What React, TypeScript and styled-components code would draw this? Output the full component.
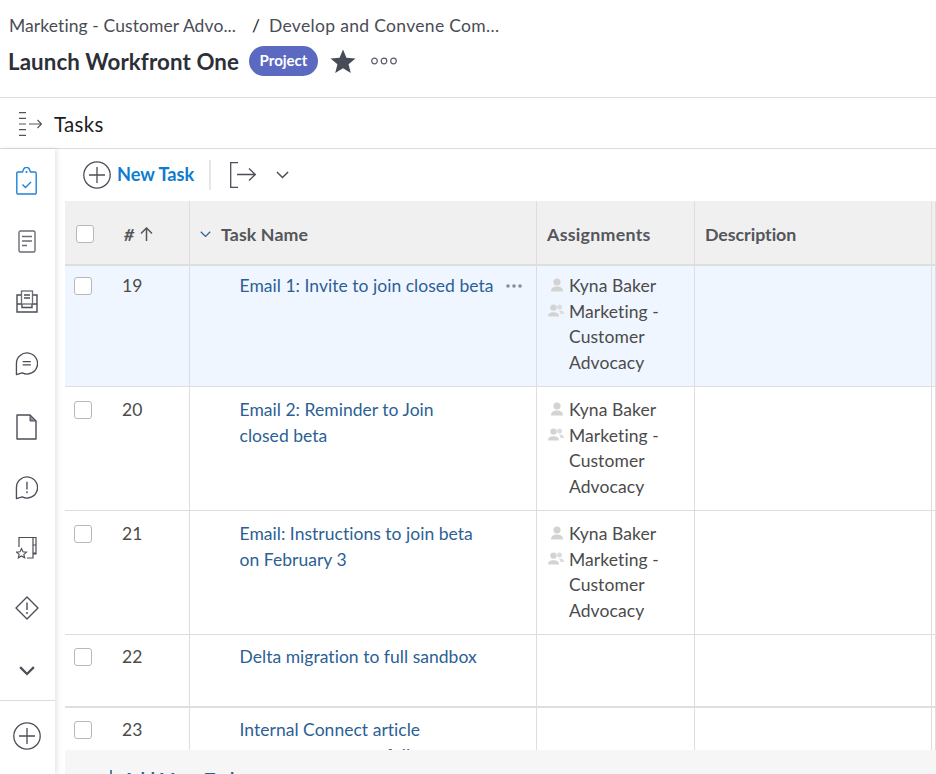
import React from "react";
import styled, { createGlobalStyle } from "styled-components";

const Global = createGlobalStyle`
  html, body { margin: 0; padding: 0; background: #fff; }
  body { font-family: "Lato", "Open Sans", "Liberation Sans", sans-serif; color: #4b4b4b; }
`;

const Page = styled.div`
  position: relative;
  width: 936px;
  height: 774px;
  overflow: hidden;
  display: flex;
  flex-direction: column;
  background: #fff;
`;

const Header = styled.header`
  height: 98px;
  box-sizing: border-box;
  padding: 14px 0 0 8px;
  border-bottom: 1px solid #dcdcdc;
  flex: none;
`;

const Crumbs = styled.div`
  display: flex;
  height: 22px;
  align-items: center;
  font-size: 17.5px;
  color: #4a4c55;
  padding-left: 1px;
`;

const Crumb = styled.span<{ $ls: number }>`
  letter-spacing: ${(p) => p.$ls}px;
`;

const Slash = styled.span`
  margin: 0 9px 0 16px;
  color: #222;
`;

const TitleRow = styled.div`
  display: flex;
  align-items: center;
  margin-top: 9px;
  height: 32px;
`;

const Title = styled.h1`
  margin: 0;
  font-size: 22.3px;
  font-weight: 700;
  color: #2c2f38;
  letter-spacing: 0.1px;
`;

const Badge = styled.span`
  margin-left: 10px;
  width: 69px;
  height: 30px;
  padding-bottom: 2px;
  box-sizing: border-box;
  border-radius: 15px;
  background: #5c69c1;
  color: #fff;
  font-size: 15px;
  font-weight: 700;
  display: flex;
  align-items: center;
  justify-content: center;
`;

const IconSlot = styled.span<{ $ml?: number }>`
  display: flex;
  flex: none;
  margin-left: ${(p) => p.$ml ?? 0}px;
`;

const TabBar = styled.div`
  height: 51px;
  flex: none;
  box-sizing: border-box;
  border-bottom: 1px solid #dcdcdc;
  display: flex;
  align-items: center;
  padding: 2px 0 0 19px;
`;

const TabLabel = styled.span`
  margin-left: 12px;
  font-size: 20.5px;
  letter-spacing: 0.3px;
  color: #1c1c1c;
`;

const Body = styled.div`
  flex: 1;
  display: flex;
  min-height: 0;
`;

const Rail = styled.nav`
  width: 55px;
  flex: none;
  display: flex;
  flex-direction: column;
  box-shadow: 2px 0 5px rgba(0, 0, 0, 0.1);
  background: #fff;
  position: relative;
  z-index: 1;
`;

const RailList = styled.div`
  height: 552px;
  flex: none;
  box-sizing: border-box;
  border-bottom: 1px solid #dcdcdc;
  display: flex;
  flex-direction: column;
  align-items: center;
  padding-top: 2px;
`;

const RailItem = styled.span<{ $h: number }>`
  width: 55px;
  box-sizing: border-box;
  padding-right: 2px;
  height: ${(p) => p.$h}px;
  display: flex;
  align-items: center;
  justify-content: center;
  flex: none;
`;

const RailFoot = styled.div`
  display: flex;
  justify-content: center;
  padding: 21px 2px 0 0;
`;

const Content = styled.main`
  flex: 1;
  min-width: 0;
  padding-left: 10px;
`;

const Toolbar = styled.div`
  height: 52px;
  display: flex;
  align-items: center;
  padding-left: 18px;
  box-sizing: border-box;
`;

const NewTask = styled.span`
  margin: -2px 0 0 6px;
  font-size: 18.2px;
  font-weight: 700;
  color: #0f7ccd;
`;

const ToolDivider = styled.span`
  width: 2px;
  height: 30px;
  margin: 0 19px 0 15px;
  background: #e6e6e6;
`;

const Row = styled.div<{ $h: number; $bg?: string; $thick?: boolean }>`
  display: grid;
  grid-template-columns: 125px 347px 158px 237px 4px;
  height: ${(p) => p.$h}px;
  box-sizing: border-box;
  background: ${(p) => p.$bg ?? "#fff"};
  border-bottom: ${(p) => (p.$thick ? 2 : 1)}px solid #dedede;
`;

const Cell = styled.div`
  border-right: 1px solid #dedede;
  box-sizing: border-box;
  min-width: 0;
`;

const NumCell = styled(Cell)<{ $pad: number }>`
  display: flex;
  align-items: flex-start;
  padding: ${(p) => p.$pad + 4}px 0 0 9px;
`;

const Check = styled.span<{ $head?: boolean }>`
  display: block;
  flex: none;
  width: 18px;
  height: 18px;
  box-sizing: border-box;
  margin-left: ${(p) => (p.$head ? 1 : 0)}px;
  border: 1.5px solid #b8b8b8;
  border-radius: 3px;
  background: #fff;
`;

const RowNum = styled.span`
  margin: -1px 0 0 30px;
  font-size: 17.5px;
  line-height: 20px;
  color: #4b4b4b;
`;

const HeadCell = styled(Cell)<{ $ls?: number }>`
  display: flex;
  align-items: center;
  padding: 3px 0 0 10px;
  font-size: 17.8px;
  font-weight: 700;
  color: #55565c;
  letter-spacing: ${(p) => p.$ls ?? 0.1}px;
`;

const HeadHash = styled.span`
  margin-left: 30px;
  font-style: italic;
`;

const HeadLabel = styled.span`
  margin-left: 10px;
`;

const NameCell = styled(Cell)<{ $pad: number }>`
  position: relative;
  padding: ${(p) => p.$pad}px 30px 0 49.5px;
`;

const TaskLink = styled.span`
  display: block;
  font-size: 17.5px;
  letter-spacing: 0.03px;
  line-height: 25.6px;
  color: #2c5f95;
`;

const RowMenu = styled.span`
  position: absolute;
  top: 18px;
  right: 14px;
  display: flex;
`;

const AssignCell = styled(Cell)<{ $pad: number }>`
  padding: ${(p) => p.$pad}px 0 0 12px;
`;

const Assignee = styled.div`
  display: grid;
  grid-template-columns: 20px 1fr;
  font-size: 17.5px;
  letter-spacing: 0.08px;
  line-height: 25.6px;
  color: #4b4b4b;
`;

const AssigneeIcon = styled.span`
  display: flex;
  padding-top: 5px;
`;

const BottomBar = styled.div`
  position: absolute;
  left: 65px;
  right: 0;
  top: 750px;
  height: 24px;
  display: flex;
  align-items: flex-start;
  background: #f6f6f6;
  z-index: 2;
  padding-left: 40px;
  font-size: 17.5px;
  font-weight: 700;
  color: #2c5f95;
  white-space: nowrap;
`;

const BottomLabel = styled.span`
  margin: 18px 0 0 6px;
  line-height: 22px;
`;

const line = { fill: "none", stroke: "#4b4d57", strokeWidth: 1.4 } as const;

const StarIcon = () => (
  <svg width="26" height="25" viewBox="0 0 28 27">
    <path d="M14 .5l3.700 9 9.800.7-7.500 6.200 2.400 9.600L14 20.800 5.600 26l2.400-9.600L.5 10.200l9.800-.7z" fill="#464b58" />
  </svg>
);

const MoreIcon = () => (
  <svg width="26" height="8" viewBox="0 0 26 8">
    <g fill="none" stroke="#5a5c66" strokeWidth="1.200">
      <circle cx="3.500" cy="4" r="2.800" />
      <circle cx="13" cy="4" r="2.800" />
      <circle cx="22.500" cy="4" r="2.800" />
    </g>
  </svg>
);

const TasksTabIcon = () => (
  <svg width="23" height="24" viewBox="0 0 23 24">
    <g fill="none" stroke="#55565c" strokeWidth="1.200">
      <path d="M0 .7h7M0 6.300h7M0 12h7M0 17.700h7M0 23.300h7" />
      <path d="M10 12h12.500M18.500 8l4 4-4 4" />
    </g>
  </svg>
);

const PlusCircle = () => (
  <svg width="28" height="28" viewBox="0 0 28 28">
    <circle cx="14" cy="14" r="13.200" fill="none" stroke="#4b4d57" strokeWidth="1.300" />
    <path d="M14 6v16M6 14h16" fill="none" stroke="#4b4d57" strokeWidth="1.300" />
  </svg>
);

const ShareIcon = () => (
  <svg width="26" height="26" viewBox="0 0 26 26">
    <path d="M8 .7H.7v24.600H8" fill="none" stroke="#4b4d57" strokeWidth="1.300" />
    <path d="M7 12.500h18.300M19 6.500l6.300 6-6.300 6" fill="none" stroke="#4b4d57" strokeWidth="1.300" />
  </svg>
);

const Chevron = ({ w = 14, color = "#4b4d57", sw = 1.6 }: { w?: number; color?: string; sw?: number }) => (
  <svg width={w} height={w * 0.6} viewBox="0 0 14 8.400">
    <path d="M1 1l6 6 6-6" fill="none" stroke={color} strokeWidth={sw} />
  </svg>
);

const ArrowUp = () => (
  <svg width="13" height="14" viewBox="0 0 13 14">
    <path d="M6.500 14V1M1 6.500L6.500 1 12 6.500" fill="none" stroke="#55565c" strokeWidth="1.500" />
  </svg>
);

const Dots = () => (
  <svg width="16" height="4" viewBox="0 0 16 4">
    <g fill="#8a8c94">
      <circle cx="2" cy="2" r="1.800" />
      <circle cx="8" cy="2" r="1.800" />
      <circle cx="14" cy="2" r="1.800" />
    </g>
  </svg>
);

const UserIcon = () => (
  <svg width="14" height="14" viewBox="0 0 14 14" style={{ marginLeft: 1 }}>
    <circle cx="7" cy="4" r="3.600" fill="#d3d3d3" />
    <path d="M1 13.500c0-3.600 2.500-5 6-5s6 1.400 6 5z" fill="#d3d3d3" />
  </svg>
);

const GroupIcon = () => (
  <svg width="16" height="13" viewBox="0 0 16 13" style={{ marginLeft: -1 }}>
    <circle cx="5.500" cy="3.600" r="3.200" fill="#d3d3d3" />
    <path d="M0 12.500c0-3 2.200-4.200 5.500-4.200s5.500 1.200 5.500 4.200z" fill="#d3d3d3" />
    <circle cx="11.500" cy="3" r="2.500" fill="#dcdcdc" />
    <path d="M11 6.600c2.600-.5 5 .6 5 3.400h-3.600c-.2-1.400-.6-2.500-1.400-3.400z" fill="#dcdcdc" />
  </svg>
);

const ClipboardIcon = () => (
  <svg width="21" height="28" viewBox="0 0 21 28">
    <g fill="none" stroke="#1f84d6" strokeWidth="1.400">
      <path d="M6.500 5H2a1.200 1.200 0 0 0-1.200 1.200v19.600A1.200 1.200 0 0 0 2 27h17a1.200 1.200 0 0 0 1.200-1.200V6.200A1.200 1.200 0 0 0 19 5h-4.500l-1-2.500a3.200 3.200 0 0 0-6 0z" />
      <path d="M6.500 17.500l3 3 5.500-5.500" />
    </g>
    <circle cx="10.500" cy="5" r="1.100" fill="#1f84d6" />
  </svg>
);

const DocIcon = () => (
  <svg width="18" height="23" viewBox="0 0 18 23">
    <rect x="1" y="1" width="16" height="21" rx="1.500" fill="none" stroke="#6a6c74" strokeWidth="1.400" />
    <path d="M4 6.500h10M4 11h10M4 15.500h5" fill="none" stroke="#6a6c74" strokeWidth="1.300" />
  </svg>
);

const InboxIcon = () => (
  <svg width="22" height="23" viewBox="0 0 22 23">
    <path d="M5 5H1v17h20V5h-4" {...line} />
    <path d="M1 14h5v3.500h10V14h5" {...line} />
    <rect x="5.500" y="1" width="11" height="13" fill="#fff" stroke="#6a6c74" strokeWidth="1.300" />
    <path d="M8 5h6M8 8h6" {...line} />
  </svg>
);

const ChatIcon = ({ mark }: { mark: "lines" | "bang" }) => (
  <svg width="23" height="25" viewBox="0 0 24 25">
    <path d="M1.500 24V12.500a11 11 0 1 1 6 9.800z" {...line} strokeLinejoin="round" />
    {mark === "lines" ? (
      <path d="M8 10.500h8.500M8 14h8.500" {...line} />
    ) : (
      <path d="M12.500 6.500v8M12.500 16.500v2" {...line} />
    )}
  </svg>
);

const FileIcon = () => (
  <svg width="21" height="26" viewBox="0 0 21 26">
    <path d="M1 1h13l6 6v18H1z" {...line} strokeLinejoin="round" />
    <path d="M14 1v6h6z" fill="#8c8e96" stroke="#4b4d57" strokeWidth="1" />
  </svg>
);

const NoteStarIcon = () => (
  <svg width="21" height="23" viewBox="0 0 21 23">
    <path d="M3 11V1.500h17V9h-3v8h3V9M20 9v9h-3v4h-6M17 1.500V22" fill="none" stroke="#4b4d57" strokeWidth="1.200" />
    <path d="M5.500 12.500l1.500 3.300 3.500.3-2.700 2.300.9 3.400-3.200-1.800-3.200 1.800.9-3.400L.5 16.100l3.500-.3z" fill="none" stroke="#4b4d57" strokeWidth="1.100" />
  </svg>
);

const DiamondIcon = () => (
  <svg width="24" height="24" viewBox="0 0 24 24">
    <path d="M12 1l11 11-11 11L1 12z" {...line} strokeLinejoin="round" />
    <path d="M12 6.500v7.500M12 16v2" {...line} />
  </svg>
);

const SmallPlus = () => (
  <svg width="12" height="12" viewBox="0 0 12 12" style={{ marginTop: 20 }}>
    <path d="M6 0v12M0 6h12" fill="none" stroke="#2c5f95" strokeWidth="1.600" />
  </svg>
);

const Assignees = () => (
  <>
    <Assignee>
      <AssigneeIcon><UserIcon /></AssigneeIcon>
      <span>Kyna Baker</span>
    </Assignee>
    <Assignee>
      <AssigneeIcon><GroupIcon /></AssigneeIcon>
      <span>Marketing -<br />Customer<br />Advocacy</span>
    </Assignee>
  </>
);

type TaskRow = {
  n: number;
  h: number;
  pad: number;
  name: React.ReactNode;
  assigned?: boolean;
  bg?: string;
  menu?: boolean;
  thick?: boolean;
};

const rows: TaskRow[] = [
  { n: 19, h: 121, pad: 7, name: "Email 1: Invite to join closed beta", assigned: true, bg: "#f0f6ff", menu: true },
  { n: 20, h: 124, pad: 10, name: <>Email 2: Reminder to Join<br />closed beta</>, assigned: true },
  { n: 21, h: 124, pad: 10, name: <>Email: Instructions to join beta<br />on February 3</>, assigned: true },
  { n: 22, h: 73, pad: 9, name: "Delta migration to full sandbox", thick: true },
  { n: 23, h: 72, pad: 9, name: <>Internal Connect article<br />announce to some full</> },
];

const railIcons: { h: number; icon: React.ReactNode }[] = [
  { h: 60, icon: <ClipboardIcon /> },
  { h: 60, icon: <DocIcon /> },
  { h: 61, icon: <InboxIcon /> },
  { h: 63, icon: <ChatIcon mark="lines" /> },
  { h: 64, icon: <FileIcon /> },
  { h: 57, icon: <ChatIcon mark="bang" /> },
  { h: 63, icon: <NoteStarIcon /> },
  { h: 57, icon: <DiamondIcon /> },
  { h: 70, icon: <Chevron w={16} sw={2} /> },
];

export default function App() {
  return (
    <Page>
      <Global />
      <Header>
        <Crumbs>
          <Crumb $ls={0.09}>Marketing - Customer Advo...</Crumb>
          <Slash>/</Slash>
          <Crumb $ls={0.32}>Develop and Convene Com...</Crumb>
        </Crumbs>
        <TitleRow>
          <Title>Launch Workfront One</Title>
          <Badge>Project</Badge>
          <IconSlot $ml={12}><StarIcon /></IconSlot>
          <IconSlot $ml={15}><MoreIcon /></IconSlot>
        </TitleRow>
      </Header>
      <TabBar>
        <TasksTabIcon />
        <TabLabel>Tasks</TabLabel>
      </TabBar>
      <Body>
        <Rail>
          <RailList>
            {railIcons.map((r, i) => (
              <RailItem key={i} $h={r.h}>{r.icon}</RailItem>
            ))}
          </RailList>
          <RailFoot><PlusCircle /></RailFoot>
        </Rail>
        <Content>
          <Toolbar>
            <PlusCircle />
            <NewTask>New Task</NewTask>
            <ToolDivider />
            <ShareIcon />
            <IconSlot $ml={20}><Chevron w={13} /></IconSlot>
          </Toolbar>
          <Row $h={65} $bg="#f0f0f0" $thick>
            <HeadCell>
              <Check $head />
              <HeadHash>#</HeadHash>
              <IconSlot $ml={6}><ArrowUp /></IconSlot>
            </HeadCell>
            <HeadCell>
              <Chevron w={11} color="#2c5f95" sw={1.5} />
              <HeadLabel>Task Name</HeadLabel>
            </HeadCell>
            <HeadCell $ls={0.28}>Assignments</HeadCell>
            <HeadCell $ls={-0.05}>Description</HeadCell>
            <Cell />
          </Row>
          {rows.map((r) => (
            <Row key={r.n} $h={r.h} $bg={r.bg} $thick={r.thick}>
              <NumCell $pad={r.pad}>
                <Check />
                <RowNum>{r.n}</RowNum>
              </NumCell>
              <NameCell $pad={r.pad}>
                <TaskLink>{r.name}</TaskLink>
                {r.menu && <RowMenu><Dots /></RowMenu>}
              </NameCell>
              <AssignCell $pad={r.pad}>{r.assigned && <Assignees />}</AssignCell>
              <Cell />
              <Cell />
            </Row>
          ))}
        </Content>
      </Body>
      <BottomBar>
        <SmallPlus />
        <BottomLabel>Add More Tasks</BottomLabel>
      </BottomBar>
    </Page>
  );
}
